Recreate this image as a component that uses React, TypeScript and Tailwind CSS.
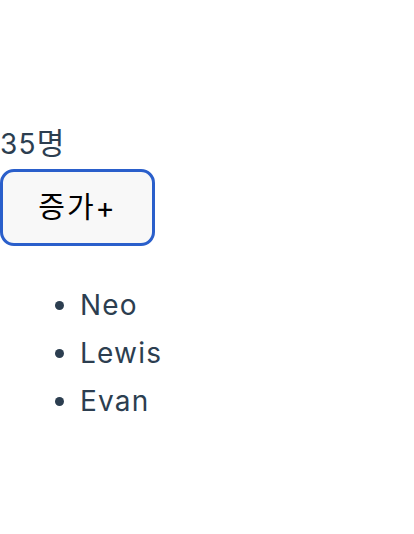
export default function App() {
  const names = ["Neo", "Lewis", "Evan"];

  return (
    <div
      className="min-h-[534px] bg-white pt-[119px] text-[28px] leading-[48px] tracking-[1.2px] text-[#2c3e50]"
      style={{ fontFamily: "Inter, 'Noto Sans CJK KR', sans-serif" }}
    >
      <p>
        35<span className="text-[30px]">명</span>
      </p>
      <button className="mt-px h-[77px] w-[155px] rounded-[14px] border-[3px] border-[#2a5fcb] bg-[#f8f8f8] text-[29px] tracking-[2px] text-black">
        증가+
      </button>
      <ul className="mt-[35px] list-disc pl-[80px]">
        {names.map((n) => (
          <li key={n}>{n}</li>
        ))}
      </ul>
    </div>
  );
}
